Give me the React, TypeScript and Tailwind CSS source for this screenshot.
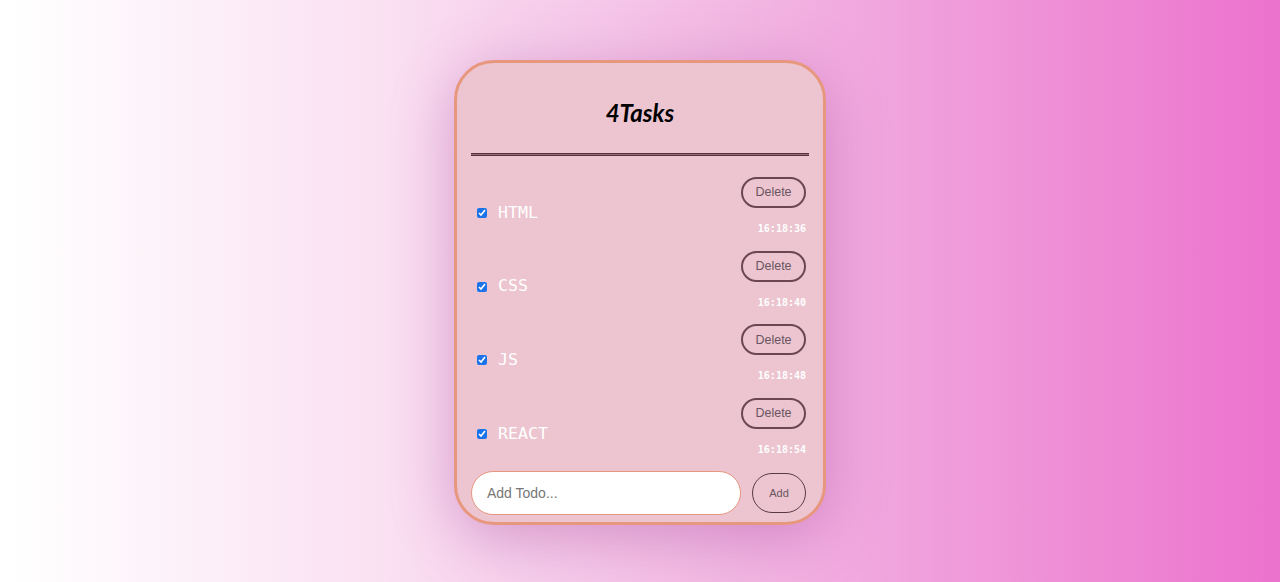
const todos = [
  { text: "HTML", time: "16:18:36" },
  { text: "CSS", time: "16:18:40" },
  { text: "JS", time: "16:18:48" },
  { text: "REACT", time: "16:18:54" },
];

export default function App() {
  return (
    <div className="min-h-screen w-full flex items-center justify-center bg-[linear-gradient(to_right,#ffffff_1%,#fae0f2_30%,#f2b4e2_60%,#ec72cd_100%)]">
      <div className="mt-[3px] w-[372px] h-[465px] flex flex-col rounded-[40px] border-[3px] border-[#e8977f] bg-[#ecc5d0] shadow-[0_12px_60px_rgba(170,80,160,0.45)] px-[14px]">
        {/* Title */}
        <h1 className="mt-[34px] text-center text-[24px] leading-[32px] font-bold italic text-black font-['Lato',sans-serif]">
          4Tasks
        </h1>

        {/* Divider */}
        <div className="mt-[24px] h-[3px] border-y border-[#55333d] bg-[#9c6876]" />

        {/* List */}
        <div className="mt-[21px] flex flex-col gap-[15.7px]">
          {todos.map((t) => (
            <div key={t.text} className="flex items-start justify-between pl-[6px] pr-[3px]">
              <div className="mt-[25px] flex items-center h-[22px]">
                <input type="checkbox" defaultChecked className="w-[10px] h-[10px] accent-[#1a73e8]" />
                <span className="ml-[11px] text-[16.6px] text-white font-['DejaVu_Sans_Mono',monospace]">
                  {t.text}
                </span>
              </div>
              <div className="flex flex-col items-end">
                <button className="w-[65px] h-[31px] rounded-full border-2 border-[#6c4753] text-[12.5px] text-[#6a5560] font-['Liberation_Sans',sans-serif]">
                  Delete
                </button>
                <span className="mt-[15px] text-[10px] leading-[12px] font-bold text-white font-['DejaVu_Sans_Mono',monospace]">
                  {t.time}
                </span>
              </div>
            </div>
          ))}
        </div>

        {/* Add form */}
        <div className="mt-[15px] flex items-center pr-[3px]">
          <input
            type="text"
            placeholder="Add Todo..."
            className="w-[270px] h-[44px] rounded-full border-[1.5px] border-[#e8967e] bg-white pl-[15px] text-[14px] text-[#555] placeholder-[#777] outline-none font-['Liberation_Sans',sans-serif]"
          />
          <button className="ml-auto w-[54px] h-[40px] rounded-full border-[1.5px] border-[#5a3a45] text-[11px] text-[#6a5560] font-['Liberation_Sans',sans-serif]">
            Add
          </button>
        </div>
      </div>
    </div>
  );
}
